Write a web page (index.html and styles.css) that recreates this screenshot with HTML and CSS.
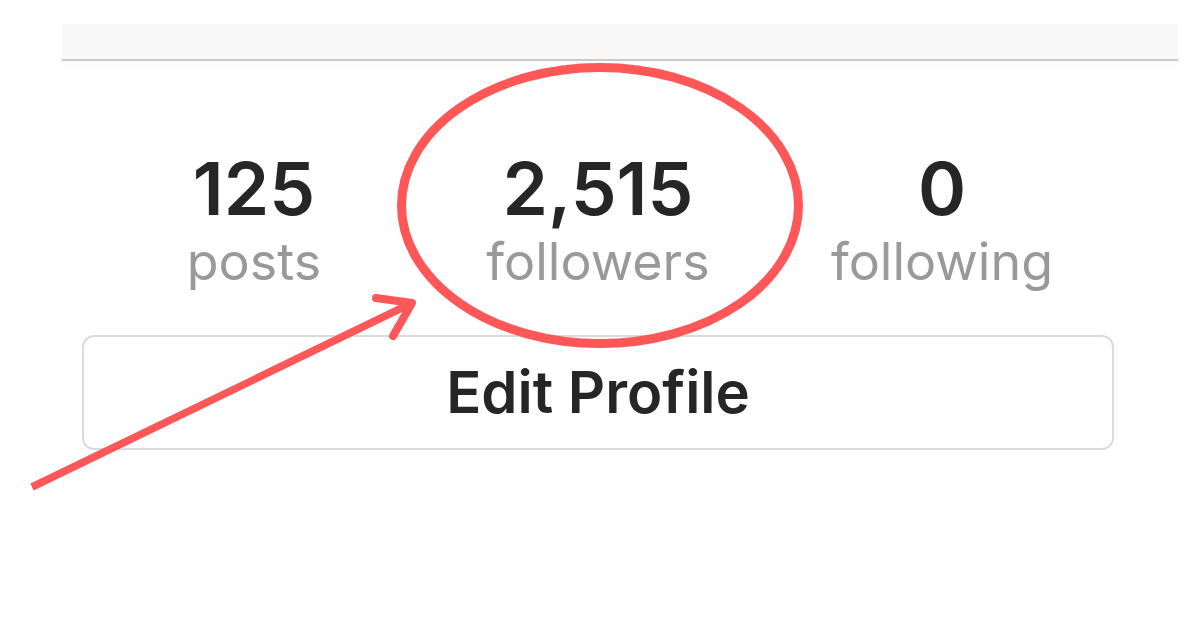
FILE: index.html
```html
<!DOCTYPE html>
<html lang="en">
<head>
  <meta charset="UTF-8" />
  <meta name="viewport" content="width=device-width, initial-scale=1.0"/>
  <title>Profile stats</title>
  <link rel="stylesheet" href="styles.css">
</head>
<body>
  <div class="page">
    <div class="topbar"></div>

    <div class="profile">
      <ul class="stats">
        <li><span class="count">125</span><span class="label">posts</span></li>
        <li><span class="count">2,515</span><span class="label">followers</span></li>
        <li><span class="count">0</span><span class="label">following</span></li>
      </ul>
      <button class="edit">Edit Profile</button>
    </div>

    <!-- red hand-drawn annotation on top -->
    <svg class="annotation" width="1200" height="628" viewBox="0 0 1200 628">
      <ellipse cx="600" cy="205.5" rx="198.5" ry="138" fill="none" stroke="#fe5757" stroke-width="9"/>
      <line x1="32" y1="487" x2="410" y2="304" stroke="#fe5757" stroke-width="7.5"/>
      <polyline points="376,298 412,303 393,336" fill="none" stroke="#fe5757" stroke-width="8" stroke-linecap="round" stroke-linejoin="round"/>
    </svg>
  </div>
</body>
</html>
```

FILE: styles.css
```css
* {
  box-sizing: border-box;
}

body {
  margin: 0;
  background: #fff;
  font-family: "Inter", "Helvetica Neue", sans-serif;
  color: #262626;
}

.page {
  position: relative;
  width: 1200px;
  height: 628px;
  overflow: hidden;
}

.topbar {
  margin: 24px 0 0 62px;
  width: 1116px;
  height: 37px;
  background: #f9f9f9;
  border-bottom: 2px solid #c9c9c9;
  box-shadow: 0 8px 0 #fcfcfc;
}

.profile {
  margin-left: 82px;
  width: 1032px;
}

.stats {
  display: grid;
  grid-template-columns: repeat(3, 1fr);
  margin: 91px 0 0;
  padding: 0;
  list-style: none;
  text-align: center;
}

.count {
  display: block;
  font-size: 73px;
  line-height: 73px;
  font-weight: 600;
  color: #262626;
}

.label {
  display: block;
  margin-top: 11px;
  font-size: 52px;
  line-height: 52px;
  color: #999;
}

.edit {
  display: block;
  width: 100%;
  margin-top: 47px;
  padding: 26px 0 27px;
  border: 2px solid #dbdbdb;
  border-radius: 12px;
  background: #fff;
  font-family: inherit;
  font-size: 58px;
  line-height: 58px;
  font-weight: 600;
  color: #262626;
}

.annotation {
  position: absolute;
  top: 0;
  left: 0;
  pointer-events: none;
}
```
